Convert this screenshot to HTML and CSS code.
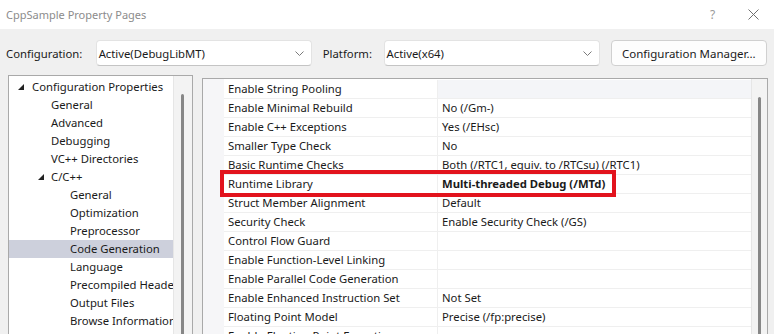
FILE: index.html
```html
<!DOCTYPE html>
<html lang="en">
<head>
  <meta charset="UTF-8" />
  <title>CppSample Property Pages</title>
  <link rel="stylesheet" href="styles.css">
</head>
<body>

  <div class="titlebar">
    <span class="title">CppSample Property Pages</span>
    <span class="help">?</span>
    <span class="close">
      <svg width="11" height="11" viewBox="0 0 11 11"><path d="M0.5 0.5 L10.5 10.5 M10.5 0.5 L0.5 10.5" stroke="#6f6f6f" stroke-width="1" fill="none"/></svg>
    </span>
  </div>

  <div class="toolbar">
    <label class="lbl-config">Configuration:</label>
    <div class="select">
      <span>Active(DebugLibMT)</span>
      <svg class="chev" width="9" height="5" viewBox="0 0 9 5"><path d="M0.5 0.5 L4.5 4.5 L8.5 0.5" stroke="#7a7a7a" fill="none"/></svg>
    </div>
    <label class="lbl-platform">Platform:</label>
    <div class="select">
      <span>Active(x64)</span>
      <svg class="chev" width="9" height="5" viewBox="0 0 9 5"><path d="M0.5 0.5 L4.5 4.5 L8.5 0.5" stroke="#7a7a7a" fill="none"/></svg>
    </div>
    <button class="cfg-btn">Configuration Manager...</button>
  </div>

  <div class="main">
    <div class="tree-panel">
      <ul class="tree">
        <li class="lvl0"><span class="arrow"></span>Configuration Properties</li>
        <li class="lvl1">General</li>
        <li class="lvl1">Advanced</li>
        <li class="lvl1">Debugging</li>
        <li class="lvl1">VC++ Directories</li>
        <li class="lvl1 open"><span class="arrow"></span>C/C++</li>
        <li class="lvl2">General</li>
        <li class="lvl2">Optimization</li>
        <li class="lvl2">Preprocessor</li>
        <li class="lvl2 selected">Code Generation</li>
        <li class="lvl2">Language</li>
        <li class="lvl2">Precompiled Headers</li>
        <li class="lvl2">Output Files</li>
        <li class="lvl2">Browse Information</li>
      </ul>
      <div class="vscroll"><div class="thumb"></div></div>
    </div>

    <div class="grid-panel">
      <div class="grid">
        <div class="row first"><div class="name">Enable String Pooling</div><div class="value"></div></div>
        <div class="row"><div class="name">Enable Minimal Rebuild</div><div class="value">No (/Gm-)</div></div>
        <div class="row"><div class="name">Enable C++ Exceptions</div><div class="value">Yes (/EHsc)</div></div>
        <div class="row"><div class="name">Smaller Type Check</div><div class="value">No</div></div>
        <div class="row"><div class="name">Basic Runtime Checks</div><div class="value">Both (/RTC1, equiv. to /RTCsu) (/RTC1)</div></div>
        <div class="row"><div class="name">Runtime Library</div><div class="value bold">Multi-threaded Debug (/MTd)</div></div>
        <div class="row"><div class="name">Struct Member Alignment</div><div class="value">Default</div></div>
        <div class="row"><div class="name">Security Check</div><div class="value">Enable Security Check (/GS)</div></div>
        <div class="row"><div class="name">Control Flow Guard</div><div class="value"></div></div>
        <div class="row"><div class="name">Enable Function-Level Linking</div><div class="value"></div></div>
        <div class="row"><div class="name">Enable Parallel Code Generation</div><div class="value"></div></div>
        <div class="row"><div class="name">Enable Enhanced Instruction Set</div><div class="value">Not Set</div></div>
        <div class="row"><div class="name">Floating Point Model</div><div class="value">Precise (/fp:precise)</div></div>
        <div class="row"><div class="name">Enable Floating Point Exceptions</div><div class="value"></div></div>
      </div>
      <div class="vscroll"><div class="thumb"></div></div>
      <div class="callout"></div>
    </div>
  </div>

</body>
</html>
```

FILE: styles.css
```css
:root {
  --dialog-bg: #f0f0f0;
  --panel-border: #a9a9a9;
  --text: #1a1a1a;
  --grid-line: #efefef;
  --selected: #cdd0dc;
  --callout: #e2131d;
}

* {
  box-sizing: border-box;
  margin: 0;
  padding: 0;
}

body {
  width: 774px;
  height: 334px;
  overflow: hidden;
  background-color: var(--dialog-bg);
  color: var(--text);
  font-family: 'Noto Sans', 'Open Sans', sans-serif;
  font-size: 11.3px;
}

/* title bar */
.titlebar {
  height: 29px;
  background-color: #fff;
  display: flex;
  align-items: center;
  padding-left: 6px;
}

.title {
  flex: 1;
  color: #8c8c8c;
  font-size: 11px;
}

.help {
  color: #9a9a9a;
  font-size: 12px;
  width: 38px;
}

.close {
  width: 26px;
  display: flex;
}

/* configuration row */
.toolbar {
  display: flex;
  align-items: center;
  padding: 11px 7px 7px 6px;
}

.lbl-config {
  width: 90px;
}

.lbl-platform {
  width: 61px;
}

.select {
  width: 217px;
  height: 26px;
  margin-right: 11px;
  background-color: #fff;
  border: 1px solid #e3e3e3;
  border-bottom-color: #c4c4c4;
  border-radius: 4px;
  display: flex;
  align-items: center;
  justify-content: space-between;
  padding: 0 7px 0 2px;
}

.chev {
  display: block;
}

.cfg-btn {
  width: 157px;
  height: 26px;
  background-color: #fdfdfd;
  border: 1px solid #d0d0d0;
  border-radius: 4px;
  font-family: inherit;
  font-size: 11.5px;
  color: var(--text);
}

/* tree */
.main {
  display: flex;
  align-items: flex-start;
  padding-left: 8px;
  gap: 9px;
}

.tree-panel {
  width: 185px;
  height: 262px;
  margin-top: 2px;
  border: 1px solid var(--panel-border);
  background-color: #fff;
  display: flex;
}

.tree {
  list-style: none;
  width: 165px;
  padding-top: 2px;
  overflow: hidden;
  border-right: 1px solid #e6e6e6;
}

.tree li {
  height: 18px;
  line-height: 18px;
  white-space: nowrap;
  position: relative;
}

.tree .lvl0 { padding-left: 23px; }
.tree .lvl1 { padding-left: 42px; }
.tree .lvl2 { padding-left: 61px; }

.tree .selected {
  background-color: var(--selected);
}

.arrow {
  position: absolute;
  top: 6px;
  width: 6px;
  height: 6px;
  background-color: #222;
  clip-path: polygon(100% 0, 100% 100%, 0 100%);
}

.lvl0 .arrow { left: 9px; }
.lvl1 .arrow { left: 29px; }

.vscroll {
  flex: 1;
  background-color: #f3f3f3;
  position: relative;
}

.thumb {
  position: absolute;
  top: 18px;
  bottom: 0;
  width: 3px;
  border-radius: 2px;
  background-color: #878787;
}

.tree-panel .thumb { left: 7px; }

/* property grid */
.grid-panel {
  width: 566px;
  height: 280px;
  margin-top: 5px;
  border: 1px solid var(--panel-border);
  background-color: #fff;
  display: flex;
  position: relative;
}

.grid {
  width: 549px;
  padding-top: 1px;
  border-right: 1px solid #e6e6e6;
  background: linear-gradient(to right, #f6f6f8 0, #f6f6f8 21px, #fff 21px);
}

.row {
  display: flex;
  height: 19px;
  margin-left: 21px;
  border-bottom: 1px solid var(--grid-line);
  line-height: 18px;
  white-space: nowrap;
}

.row .name {
  width: 214px;
  padding-left: 4px;
  border-right: 1px solid var(--grid-line);
}

.row .value {
  flex: 1;
  padding-left: 4px;
}

.row.first .value {
  background-color: #f4f5f8;
}

.value.bold {
  font-weight: 700;
}

.grid-panel .thumb { left: 6px; }

.callout {
  position: absolute;
  left: 17px;
  top: 91px;
  width: 396px;
  height: 27px;
  border: 4px solid var(--callout);
}
```
